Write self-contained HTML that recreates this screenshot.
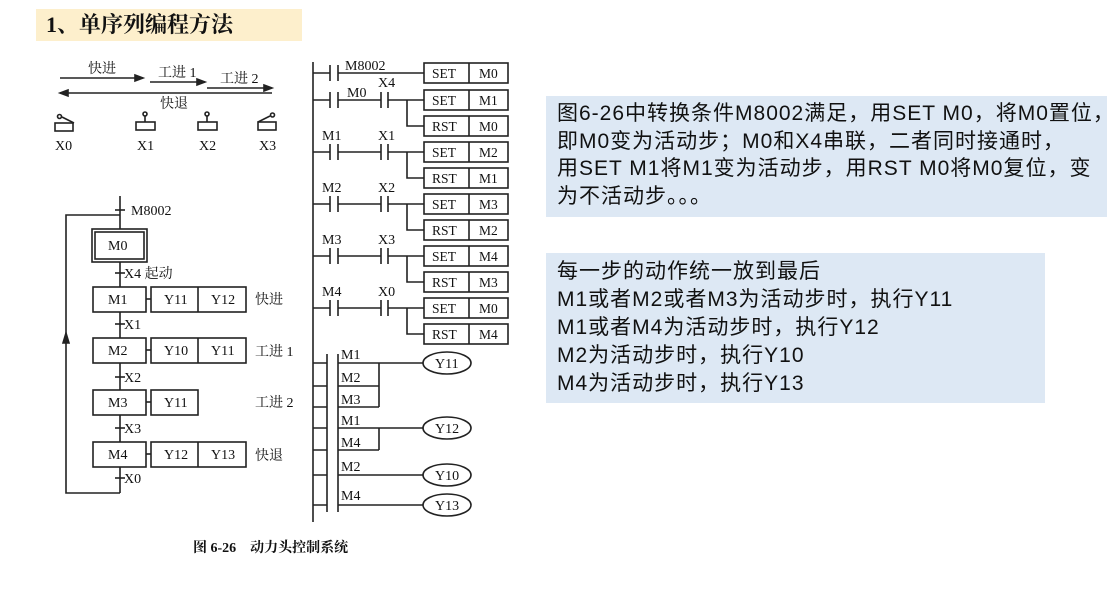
<!DOCTYPE html>
<html><head><meta charset="utf-8">
<style>
html,body{margin:0;padding:0;background:#fff;width:1107px;height:603px;overflow:hidden;position:relative}
.h{position:absolute;left:36px;top:9px;width:266px;height:32px;background:#fdefcc;font-family:"Liberation Serif","Noto Serif CJK SC",serif;font-weight:bold;font-size:22px;line-height:32px;color:#111;padding-left:10px;box-sizing:border-box}
.b{position:absolute;background:#dde8f4;font-family:"Liberation Sans","Noto Sans CJK SC",sans-serif;color:#111;box-sizing:border-box}
.b1{left:546px;top:96px;width:561px;height:121px;font-size:21px;letter-spacing:1px;line-height:27.6px;padding:4px 0 0 11px;white-space:nowrap}
.b2{left:546px;top:253px;width:499px;height:150px;font-size:21px;letter-spacing:1px;line-height:28px;padding:5px 0 0 11px;white-space:nowrap}
svg{position:absolute;left:0;top:0}
svg text{font-family:"Liberation Serif","Noto Serif CJK SC",serif;fill:#111}
</style></head><body>
<div class="h">1、单序列编程方法</div>
<div class="b b1">图6-26中转换条件M8002满足，用SET M0，将M0置位，<br>即M0变为活动步；M0和X4串联，二者同时接通时，<br>用SET M1将M1变为活动步，用RST M0将M0复位，变<br>为不活动步。。。</div>
<div class="b b2">每一步的动作统一放到最后<br>M1或者M2或者M3为活动步时，执行Y11<br>M1或者M4为活动步时，执行Y12<br>M2为活动步时，执行Y10<br>M4为活动步时，执行Y13</div>
<svg width="1107" height="603" viewBox="0 0 1107 603">
<g stroke="#222" stroke-width="1.6" fill="none">
<line x1="60" y1="78" x2="143" y2="78"/><path d="M135 75 L143 78 L135 81Z" fill="#222"/>
<line x1="150" y1="82" x2="205" y2="82"/><path d="M197 79 L205 82 L197 85Z" fill="#222"/>
<line x1="207" y1="88" x2="272" y2="88"/><path d="M264 85 L272 88 L264 91Z" fill="#222"/>
<line x1="60" y1="93" x2="272" y2="93"/><path d="M68 90 L60 93 L68 96Z" fill="#222"/>
<rect x="55" y="123" width="18" height="8"/><line x1="62" y1="117" x2="74" y2="123"/><circle cx="59.5" cy="116.5" r="2"/>
<rect x="136" y="122" width="19" height="8"/><line x1="145" y1="116" x2="145" y2="122"/><circle cx="145" cy="114" r="2"/>
<rect x="198" y="122" width="19" height="8"/><line x1="207" y1="116" x2="207" y2="122"/><circle cx="207" cy="114" r="2"/>
<rect x="258" y="122" width="18" height="8"/><line x1="258" y1="122" x2="270" y2="116"/><circle cx="272.5" cy="115" r="2"/>
<line x1="120" y1="196" x2="120" y2="229"/>
<line x1="115" y1="210" x2="125" y2="210"/>
<polyline points="120,215 66,215 66,493 120,493"/>
<path d="M63 343 L66 333 L69 343Z" fill="#222"/>
<rect x="92" y="229" width="55" height="33"/><rect x="95" y="232" width="49" height="27"/>
<line x1="120" y1="262" x2="120" y2="287"/><line x1="115" y1="273" x2="125" y2="273"/>
<rect x="93" y="287" width="53" height="25"/><line x1="146" y1="299" x2="151" y2="299"/>
<rect x="151" y="287" width="95" height="25"/><line x1="198" y1="287" x2="198" y2="312"/>
<line x1="120" y1="312" x2="120" y2="338"/><line x1="115" y1="324" x2="125" y2="324"/>
<rect x="93" y="338" width="53" height="25"/><line x1="146" y1="350" x2="151" y2="350"/>
<rect x="151" y="338" width="95" height="25"/><line x1="198" y1="338" x2="198" y2="363"/>
<line x1="120" y1="363" x2="120" y2="390"/><line x1="115" y1="377" x2="125" y2="377"/>
<rect x="93" y="390" width="53" height="25"/><line x1="146" y1="402" x2="151" y2="402"/>
<rect x="151" y="390" width="47" height="25"/>
<line x1="120" y1="415" x2="120" y2="442"/><line x1="115" y1="428" x2="125" y2="428"/>
<rect x="93" y="442" width="53" height="25"/><line x1="146" y1="454" x2="151" y2="454"/>
<rect x="151" y="442" width="95" height="25"/><line x1="198" y1="442" x2="198" y2="467"/>
<line x1="120" y1="467" x2="120" y2="493"/><line x1="115" y1="478" x2="125" y2="478"/>
<line x1="313" y1="62" x2="313" y2="522"/>
<line x1="313" y1="73" x2="330" y2="73"/><line x1="330" y1="65" x2="330" y2="81"/><line x1="338" y1="65" x2="338" y2="81"/><line x1="338" y1="73" x2="424" y2="73"/>
<rect x="424" y="63" width="84" height="20"/><line x1="469" y1="63" x2="469" y2="83"/>
<path d="M313 100H330M330 92V108M338 92V108M338 100H381M381 92V108M388 92V108M388 100H424M407 100V126H424"/>
<path d="M313 152H330M330 144V160M338 144V160M338 152H381M381 144V160M388 144V160M388 152H424M407 152V178H424"/>
<path d="M313 204H330M330 196V212M338 196V212M338 204H381M381 196V212M388 196V212M388 204H424M407 204V230H424"/>
<path d="M313 256H330M330 248V264M338 248V264M338 256H381M381 248V264M388 248V264M388 256H424M407 256V282H424"/>
<path d="M313 308H330M330 300V316M338 300V316M338 308H381M381 300V316M388 300V316M388 308H424M407 308V334H424"/>
<rect x="424" y="90" width="84" height="20"/><line x1="469" y1="90" x2="469" y2="110"/>
<rect x="424" y="116" width="84" height="20"/><line x1="469" y1="116" x2="469" y2="136"/>
<rect x="424" y="142" width="84" height="20"/><line x1="469" y1="142" x2="469" y2="162"/>
<rect x="424" y="168" width="84" height="20"/><line x1="469" y1="168" x2="469" y2="188"/>
<rect x="424" y="194" width="84" height="20"/><line x1="469" y1="194" x2="469" y2="214"/>
<rect x="424" y="220" width="84" height="20"/><line x1="469" y1="220" x2="469" y2="240"/>
<rect x="424" y="246" width="84" height="20"/><line x1="469" y1="246" x2="469" y2="266"/>
<rect x="424" y="272" width="84" height="20"/><line x1="469" y1="272" x2="469" y2="292"/>
<rect x="424" y="298" width="84" height="20"/><line x1="469" y1="298" x2="469" y2="318"/>
<rect x="424" y="324" width="84" height="20"/><line x1="469" y1="324" x2="469" y2="344"/>
<path d="M327 354V512M338 354V512"/>
<path d="M313 363H327M313 386H327M313 407H327M313 428H327M313 450H327M313 475H327M313 505H327"/>
<path d="M338 363H423M338 386H379M338 407H379M379 363V407"/>
<path d="M338 428H423M338 450H379M379 428V450"/>
<path d="M338 475H423M338 505H423"/>
<ellipse cx="447" cy="363" rx="24" ry="11"/>
<ellipse cx="447" cy="428" rx="24" ry="11"/>
<ellipse cx="447" cy="475" rx="24" ry="11"/>
<ellipse cx="447" cy="505" rx="24" ry="11"/>
</g>
<g font-size="14">
<text x="88" y="73">快进</text><text x="158" y="77">工进 1</text><text x="220" y="83">工进 2</text><text x="160" y="108">快退</text>
<text x="55" y="150">X0</text><text x="137" y="150">X1</text><text x="199" y="150">X2</text><text x="259" y="150">X3</text>
<text x="131" y="215">M8002</text>
<text x="108" y="250">M0</text>
<text x="124" y="278">X4 起动</text>
<text x="108" y="304">M1</text><text x="164" y="304">Y11</text><text x="211" y="304">Y12</text><text x="255" y="304">快进</text>
<text x="124" y="329">X1</text>
<text x="108" y="355">M2</text><text x="164" y="355">Y10</text><text x="211" y="355">Y11</text><text x="255" y="356">工进 1</text>
<text x="124" y="382">X2</text>
<text x="108" y="407">M3</text><text x="164" y="407">Y11</text><text x="255" y="407">工进 2</text>
<text x="124" y="433">X3</text>
<text x="108" y="459">M4</text><text x="164" y="459">Y12</text><text x="211" y="459">Y13</text><text x="255" y="460">快退</text>
<text x="124" y="483">X0</text>
<text x="345" y="70">M8002</text><text x="378" y="87">X4</text><text x="347" y="97">M0</text>
<text x="322" y="140">M1</text><text x="378" y="140">X1</text>
<text x="322" y="192">M2</text><text x="378" y="192">X2</text>
<text x="322" y="244">M3</text><text x="378" y="244">X3</text>
<text x="322" y="296">M4</text><text x="378" y="296">X0</text>
<g font-size="13.5">
<text x="432" y="78">SET</text><text x="479" y="78">M0</text>
<text x="432" y="105">SET</text><text x="479" y="105">M1</text>
<text x="432" y="131">RST</text><text x="479" y="131">M0</text>
<text x="432" y="157">SET</text><text x="479" y="157">M2</text>
<text x="432" y="183">RST</text><text x="479" y="183">M1</text>
<text x="432" y="209">SET</text><text x="479" y="209">M3</text>
<text x="432" y="235">RST</text><text x="479" y="235">M2</text>
<text x="432" y="261">SET</text><text x="479" y="261">M4</text>
<text x="432" y="287">RST</text><text x="479" y="287">M3</text>
<text x="432" y="313">SET</text><text x="479" y="313">M0</text>
<text x="432" y="339">RST</text><text x="479" y="339">M4</text>
</g>
<text x="341" y="359">M1</text><text x="341" y="382">M2</text><text x="341" y="404">M3</text><text x="341" y="425">M1</text><text x="341" y="447">M4</text><text x="341" y="471">M2</text><text x="341" y="500">M4</text>
<text x="435" y="368">Y11</text><text x="435" y="433">Y12</text><text x="435" y="480">Y10</text><text x="435" y="510">Y13</text>
<text x="193" y="552" font-size="14" font-weight="bold">图 6-26　动力头控制系统</text>
</g>
</svg>
</body></html>
